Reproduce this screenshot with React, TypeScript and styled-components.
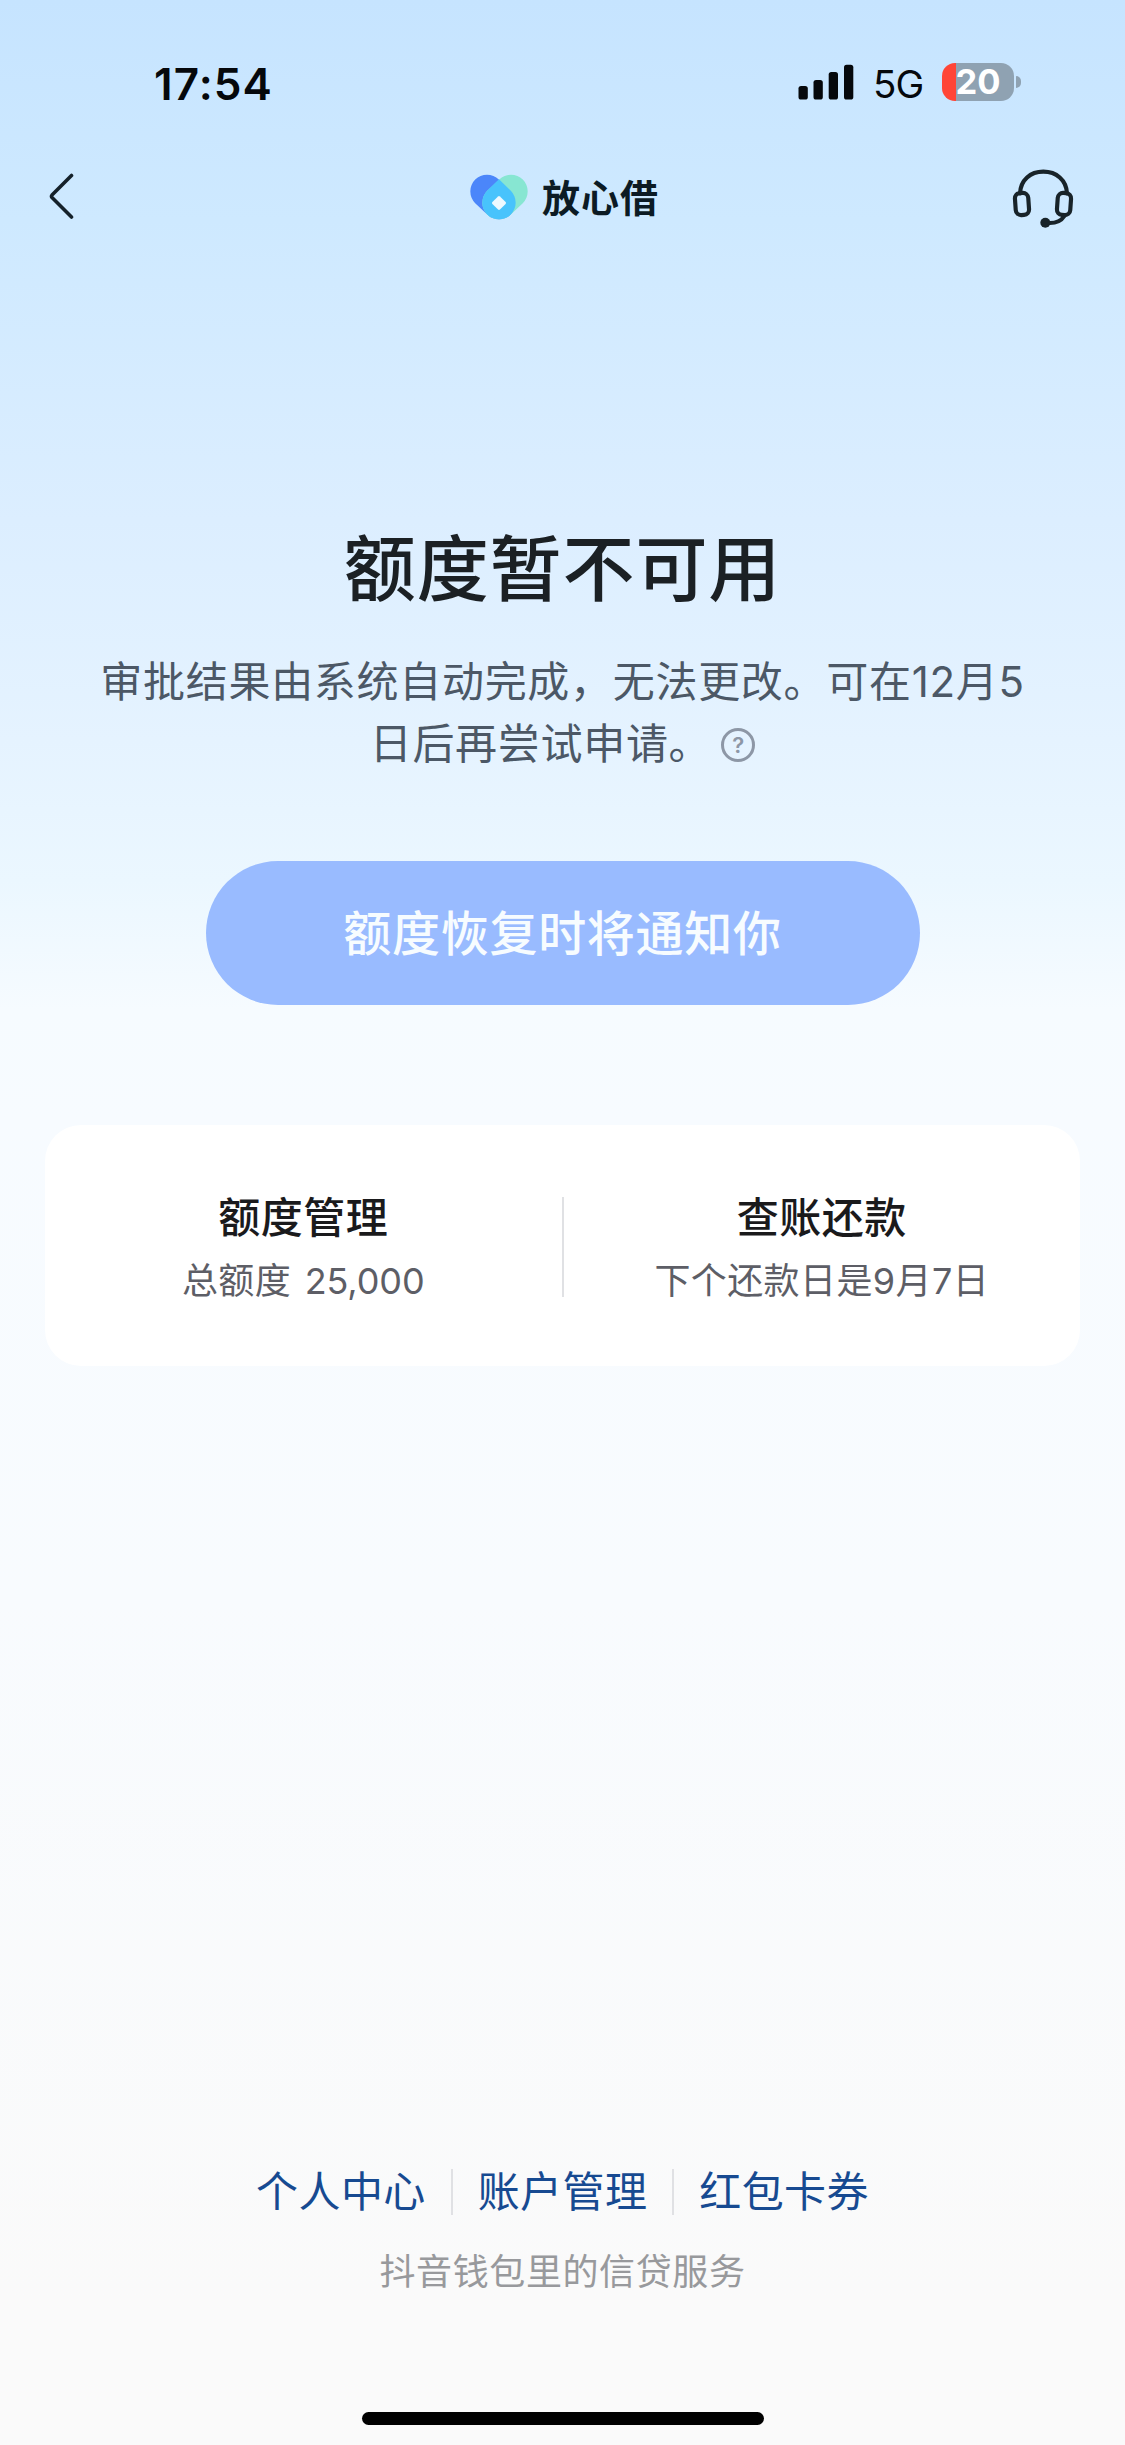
import React from "react";
import styled, { createGlobalStyle } from "styled-components";

const GlobalStyle = createGlobalStyle`
  * { box-sizing: border-box; }
  body {
    margin: 0;
    background: #fafafa;
    font-family: Inter, "Noto Sans CJK SC", sans-serif;
  }
`;

const Screen = styled.div`
  width: 1125px;
  height: 2445px;
  display: flex;
  flex-direction: column;
  overflow: hidden;
  background: linear-gradient(
    180deg,
    #c6e4ff 0px,
    #cee9ff 220px,
    #dceeff 520px,
    #e5f3ff 740px,
    #ebf7ff 880px,
    #f6fbff 1010px,
    #f7fbff 1120px,
    #f8fbfe 1600px,
    #fafafa 2300px
  );
`;

const StatusBar = styled.div`
  height: 140px;
  padding: 63px 104px 0 154px;
  display: flex;
  align-items: flex-start;
  justify-content: space-between;
`;

const Clock = styled.div`
  font-size: 44px;
  font-weight: 600;
  line-height: 42px;
  letter-spacing: 1.1px;
  color: #05080c;
`;

const StatusIcons = styled.div`
  height: 38px;
  display: flex;
  align-items: center;
`;

const Network = styled.div`
  margin-left: 19px;
  padding-top: 3px;
  width: 69px;
  font-size: 38.5px;
  line-height: 42px;
  letter-spacing: -1px;
  color: #05080c;
`;

const Battery = styled.div`
  width: 72px;
  height: 38px;
  border-radius: 13px;
  display: flex;
  align-items: center;
  justify-content: center;
  background: linear-gradient(90deg, #ff4537 0 14.5px, #8fa2b2 14.5px);
  color: #fff;
  font-size: 34.5px;
  font-weight: 700;
  line-height: 38px;
`;

const BatteryTip = styled.div`
  width: 5px;
  height: 12px;
  margin-left: 2px;
  border-radius: 0 5px 5px 0;
  background: #8fa2b2;
`;

const NavBar = styled.header`
  height: 114px;
  padding: 0 50px 0 48px;
  display: grid;
  grid-template-columns: 64px 1fr 64px;
  align-items: center;
`;

const IconButton = styled.button<{ $end?: boolean }>`
  padding: ${(p) => (p.$end ? "3px 0 0" : "0")};
  border: 0;
  background: none;
  height: 64px;
  display: flex;
  align-items: center;
  justify-content: ${(p) => (p.$end ? "flex-end" : "flex-start")};
`;

const Brand = styled.div`
  display: flex;
  align-items: center;
  justify-content: center;
  gap: 14px;
  padding-left: 6px;
`;

const BrandName = styled.span`
  padding-bottom: 3px;
  font-family: "Noto Sans CJK SC", sans-serif;
  font-size: 38px;
  font-weight: 700;
  line-height: 46px;
  letter-spacing: 1px;
  color: #0c1b24;
`;

const Main = styled.main`
  display: flex;
  flex-direction: column;
  align-items: center;
`;

const Title = styled.h1`
  margin: 265px 0 32px;
  font-size: 72px;
  font-weight: 500;
  line-height: 100px;
  letter-spacing: 0.9px;
  color: #1b2024;
`;

const Description = styled.p`
  margin: 0 0 86px;
  font-size: 42px;
  line-height: 62px;
  letter-spacing: 0.7px;
  text-align: center;
  white-space: nowrap;
  color: #4c5866;
`;

const Help = styled.span`
  display: inline-flex;
  align-items: center;
  justify-content: center;
  width: 34px;
  height: 34px;
  margin-left: 10px;
  border: 3px solid #8d97a6;
  border-radius: 50%;
  font-size: 22px;
  font-weight: 600;
  line-height: 28px;
  letter-spacing: 0;
  vertical-align: 6px;
  color: #8d97a6;
`;

const NotifyButton = styled.button`
  width: 714px;
  height: 144px;
  padding: 0 0 7px;
  border: 0;
  border-radius: 72px;
  background: #99bbff;
  color: #f7fcff;
  font-family: inherit;
  font-size: 48px;
  font-weight: 500;
  letter-spacing: 0.7px;
`;

const Card = styled.section`
  width: 1035px;
  height: 241px;
  margin-top: 120px;
  padding-top: 2px;
  border-radius: 36px;
  background: #fff;
  display: grid;
  grid-template-columns: 1fr 2px 1fr;
  align-items: center;
`;

const CardItem = styled.div`
  display: flex;
  flex-direction: column;
  align-items: center;
  gap: 8px;
`;

const CardTitle = styled.div`
  font-size: 42px;
  font-weight: 500;
  line-height: 60px;
  letter-spacing: 0.5px;
  color: #1a1a1c;
`;

const CardText = styled.div`
  font-size: 36px;
  line-height: 50px;
  letter-spacing: 0.4px;
  color: #5d5e66;
`;

const Amount = styled.span`
  margin-left: 3px;
  letter-spacing: -0.1px;
`;

const Divider = styled.div<{ $height: number }>`
  width: 2px;
  height: ${(p) => p.$height}px;
  background: #e0e1e4;
`;

const Footer = styled.footer`
  margin-top: auto;
  padding-bottom: 20px;
  display: flex;
  flex-direction: column;
  align-items: center;
`;

const Links = styled.nav`
  display: flex;
  align-items: center;
  gap: 25px;
`;

const Link = styled.a`
  padding-top: 1px;
  font-size: 42px;
  line-height: 60px;
  letter-spacing: 0.4px;
  color: #174a91;
`;

const Note = styled.div`
  margin-top: 25px;
  font-size: 36px;
  line-height: 50px;
  letter-spacing: 0.6px;
  color: #98999c;
`;

const HomeIndicator = styled.div`
  width: 402px;
  height: 13px;
  margin-top: 115px;
  border-radius: 7px;
  background: #000;
`;

const Signal = () => (
  <svg width="56" height="36" viewBox="0 0 56 36" fill="#05080c">
    <rect x="0.5" y="22" width="9.3" height="13.5" rx="2.6" />
    <rect x="15.5" y="16" width="9.3" height="19.5" rx="2.6" />
    <rect x="30.7" y="8" width="9.3" height="27.5" rx="2.6" />
    <rect x="46" y="0.7" width="9.3" height="34.8" rx="2.6" />
  </svg>
);

const BackIcon = () => (
  <svg width="28" height="48" viewBox="0 0 28 48" fill="none" stroke="#15212a" strokeWidth="3.6" strokeLinecap="round" strokeLinejoin="round">
    <path d="M23.5 2.5 L4 22.1 Q3 23.3 4 24.5 L23.5 44" />
  </svg>
);

const BrandMark = () => (
  <svg width="58" height="46" viewBox="93 104 174 138">
    <path d="M108.6 191.4 A50 50 0 0 1 179.4 120.6 L215.4 154.6 A50 50 0 0 1 144.6 225.4 Z" fill="#4b86fa" />
    <path d="M251.4 191.4 A50 50 0 0 0 180.6 120.6 L144.6 154.6 A50 50 0 0 0 215.4 225.4 Z" fill="#87e6d2" />
    <path d="M180 119.5 L215.4 154.6 A50 50 0 1 1 144.6 154.6 Z" fill="#48c3fc" />
    <rect x="164" y="175" width="32" height="32" rx="4" transform="rotate(45 180 191)" fill="#eef9ff" />
  </svg>
);

const HeadsetIcon = () => (
  <svg width="64" height="62" viewBox="754 382 192 186" fill="none" stroke="#182329" strokeWidth="12.5" strokeLinecap="round">
    <path d="M781 458 C783 418 812 393 851 393 C890 393 920 418 922 458" />
    <rect x="767" y="457" width="40" height="66" rx="16" transform="rotate(-4 787 490)" />
    <rect x="893" y="457" width="40" height="66" rx="16" transform="rotate(4 913 490)" />
    <path d="M914 526 C904 542 889 548 866 547" />
    <circle cx="857" cy="546" r="15" fill="#182329" stroke="none" />
  </svg>
);

export default function App() {
  return (
    <>
      <GlobalStyle />
      <Screen>
        <StatusBar>
          <Clock>17:54</Clock>
          <StatusIcons>
            <Signal />
            <Network>5G</Network>
            <Battery>20</Battery>
            <BatteryTip />
          </StatusIcons>
        </StatusBar>
        <NavBar>
          <IconButton aria-label="返回"><BackIcon /></IconButton>
          <Brand>
            <BrandMark />
            <BrandName>放心借</BrandName>
          </Brand>
          <IconButton $end aria-label="客服"><HeadsetIcon /></IconButton>
        </NavBar>
        <Main>
          <Title>额度暂不可用</Title>
          <Description>
            审批结果由系统自动完成，无法更改。可在12月5
            <br />
            日后再尝试申请。<Help>?</Help>
          </Description>
          <NotifyButton>额度恢复时将通知你</NotifyButton>
          <Card>
            <CardItem>
              <CardTitle>额度管理</CardTitle>
              <CardText>总额度 <Amount>25,000</Amount></CardText>
            </CardItem>
            <Divider $height={100} />
            <CardItem>
              <CardTitle>查账还款</CardTitle>
              <CardText>下个还款日是9月7日</CardText>
            </CardItem>
          </Card>
        </Main>
        <Footer>
          <Links>
            <Link>个人中心</Link>
            <Divider $height={46} />
            <Link>账户管理</Link>
            <Divider $height={46} />
            <Link>红包卡券</Link>
          </Links>
          <Note>抖音钱包里的信贷服务</Note>
          <HomeIndicator />
        </Footer>
      </Screen>
    </>
  );
}
